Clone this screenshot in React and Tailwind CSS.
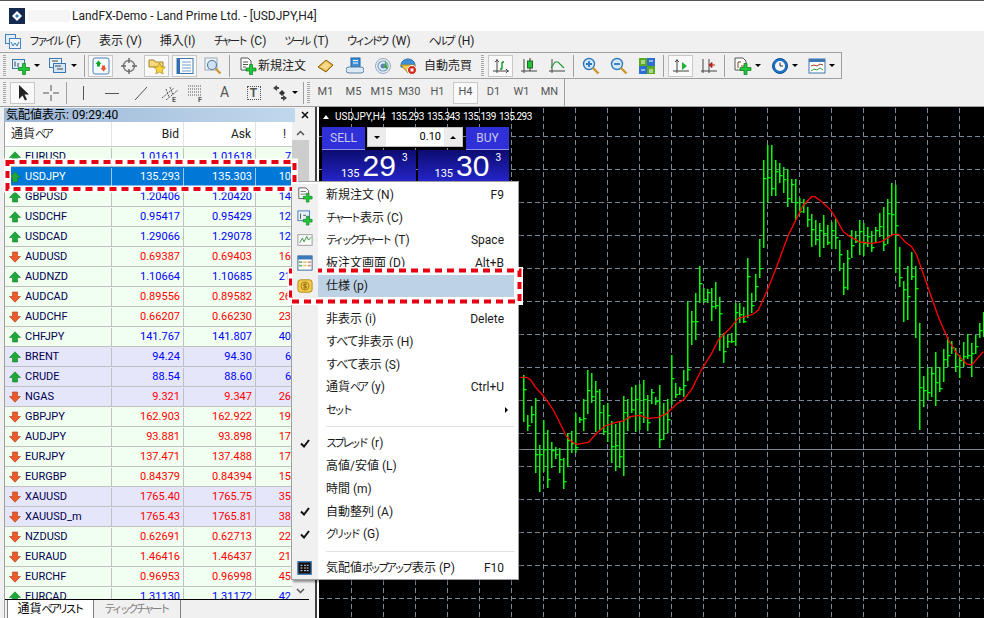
import React from 'react';

const rows = [
  ['EURUSD', '1.01611', '1.01618', '7', 1, 0],
  ['USDJPY', '135.293', '135.303', '10', 1, 0],
  ['GBPUSD', '1.20406', '1.20420', '14', 1, 0],
  ['USDCHF', '0.95417', '0.95429', '12', 1, 0],
  ['USDCAD', '1.29066', '1.29078', '12', 1, 0],
  ['AUDUSD', '0.69387', '0.69403', '16', 0, 0],
  ['AUDNZD', '1.10664', '1.10685', '21', 1, 0],
  ['AUDCAD', '0.89556', '0.89582', '26', 0, 0],
  ['AUDCHF', '0.66207', '0.66230', '23', 0, 0],
  ['CHFJPY', '141.767', '141.807', '40', 1, 0],
  ['BRENT', '94.24', '94.30', '6', 1, 1],
  ['CRUDE', '88.54', '88.60', '6', 1, 1],
  ['NGAS', '9.321', '9.347', '26', 0, 1],
  ['GBPJPY', '162.903', '162.922', '19', 0, 0],
  ['AUDJPY', '93.881', '93.898', '17', 0, 0],
  ['EURJPY', '137.471', '137.488', '17', 0, 0],
  ['EURGBP', '0.84379', '0.84394', '15', 0, 0],
  ['XAUUSD', '1765.40', '1765.75', '35', 0, 1],
  ['XAUUSD_m', '1765.43', '1765.81', '38', 0, 1],
  ['NZDUSD', '0.62691', '0.62713', '22', 0, 0],
  ['EURAUD', '1.46416', '1.46437', '21', 0, 0],
  ['EURCHF', '0.96953', '0.96998', '45', 0, 0],
  ['EURCAD', '1.31130', '1.31172', '42', 1, 0],
];

// high/low of each bar, read off the 3x crops
const bars = [[795,935],[915,962],[888,940],[865,1090],[1005,1145],[930,1085],[960,1133],[995,1075],[1012,1048],[1015,1088],[1045,1137],[970,1070],[963,1030],[910,1030],[922,938],[868,962],[780,912],[790,880],[812,965],[838,960],[885,975],[880,995],[932,1060],[942,1082],[932,1075],[858,1098],[868,962],[832,910],[825,965],[822,960],[810,940],[855,962],[838,882],[860,885],[825,1013],[880,990],[868,970],[735,885],[818,865],[832,855],[780,862],[573,812],[602,705],[548,690],[468,578],[535,580],[538,578],[535,632],[516,598],[560,722],[668,758],[675,715],[668,700],[578,708],[580,640],[592,640],[445,625],[548,610],[492,572],[388,505],[150,415],[105,280],[105,258],[150,258],[160,220],[170,248],[178,290],[208,280],[206,330],[265,310],[268,310],[290,352],[312,412],[330,405],[338,440],[315,415],[345,405],[335,418],[328,418],[390,482],[458,555],[420,540],[360,445],[362,400],[330,435],[340,438],[352,412],[362,425],[350,398],[308,380],[292,422],[268,402],[220,375],[225,488],[410,532],[512,635],[468,630],[425,510],[468,685],[640,960],[798,890],[770,870],[770,860],[725,888],[772,845],[718,815],[680,772],[692,732],[715,785],[735,805],[695,770],[672,748],[698,800],[675,732],[640,685],[605,682]];

const ma = [[0,802],[20,802],[32,810],[45,830],[70,858],[85,878],[100,900],[120,940],[140,980],[155,995],[170,1003],[205,997],[230,970],[255,948],[285,938],[310,933],[330,920],[360,916],[385,925],[415,922],[440,910],[470,882],[490,870],[515,838],[545,778],[575,730],[595,690],[630,655],[655,625],[675,620],[700,612],[715,600],[740,545],[770,470],[805,375],[850,285],[875,260],[885,260],[905,275],[930,298],[945,320],[970,365],[990,380],[1020,396],[1055,400],[1085,395],[1120,373],[1135,373],[1155,395],[1175,410],[1190,435],[1225,535],[1255,620],[1285,690],[1310,730],[1340,762],[1355,765],[1390,725]];

const closeAt = [0.3, 0.6, 0.45, 0.75, 0.2, 0.55, 0.85];

// the reference's UI font has narrow kana, so kana runs get squeezed
function Jp({ children }) {
  return String(children).split(/([\u30A0-\u30FF]+|[\u3040-\u309F]+)/).map((s, i) => {
    if (/[\u30A0-\u30FF]/.test(s)) return <span key={i} className="text-[11px] tracking-[-3px] mr-[2px]">{s}</span>;
    if (/[\u3040-\u309F]/.test(s)) return <span key={i} className="tracking-[-1px]">{s}</span>;
    return s;
  });
}

function Chart() {
  const hs = [136, 169, 202, 235, 268, 301, 334, 367, 400, 433, 466, 499, 532, 565, 598];
  const vs = [];
  for (let x = 351; x < 984; x += 32) vs.push(x);
  return (
    <svg className="block w-full h-full" viewBox="319 107 665 511">
      <g shapeRendering="crispEdges">
        {hs.map((y) => (
          <line key={y} x1="319" x2="984" y1={y + 0.5} y2={y + 0.5} stroke="#778899" strokeDasharray="5 3" />
        ))}
        {vs.map((x) => (
          <line key={x} x1={x + 0.5} x2={x + 0.5} y1="108" y2="618" stroke="#778899" strokeDasharray="5 3" />
        ))}
        <line x1="319" x2="984" y1="449.5" y2="449.5" stroke="#778899" />
      </g>
      {bars.map(([t, b], i) => {
        const x = 523 + i * 4;
        const top = Math.round(110 + t / 3);
        const bot = Math.round(110 + b / 3);
        const c = Math.round(top + (bot - top) * closeAt[i % 7]);
        return (
          <g key={i} fill="#00ff00">
            <rect x={x} y={top} width="1.5" height={bot - top} />
            <rect x={x + 1} y={c} width="2.5" height="1.3" />
          </g>
        );
      })}
      <polyline
        fill="none"
        stroke="#ff0000"
        strokeWidth="1.3"
        points={ma.map(([x, y]) => `${520 + x / 3},${110 + y / 3}`).join(' ')}
      />
    </svg>
  );
}

const GD = '#0b7a1b';

function Cross({ x = 8, y = 8, s = 5 }) {
  return (
    <path
      d={`M${x - 1.5} ${y - s}h3v${s - 1.5}h${s - 1.5}v3h-${s - 1.5}v${s - 1.5}h-3v-${s - 1.5}h-${s - 1.5}v-3h${s - 1.5}z`}
      fill="#22c83a"
      stroke={GD}
      strokeWidth="0.7"
    />
  );
}

function Caret() {
  return <span className="w-0 h-0 border-x-[3px] border-x-transparent border-t-[3px] border-t-black" />;
}

function I({ children, w = 18, h = 18 }) {
  return (
    <svg width={w} height={h} viewBox="0 0 18 18" className="shrink-0">
      {children}
    </svg>
  );
}

const NewChart = () => (
  <I>
    <rect x="0.5" y="2.5" width="12" height="9" fill="#dff0fb" stroke="#3d76b0" />
    <path d="M3 4.5v5M6 6v4" stroke="#444" />
    <Cross x={12} y={12} s={5.5} />
  </I>
);
const Profile = () => (
  <I>
    <rect x="0.5" y="1.5" width="12" height="9" fill="#e8f3fb" stroke="#3d76b0" />
    <rect x="4.5" y="6.5" width="12" height="9" fill="#d2e6f6" stroke="#3d76b0" />
    <path d="M6 9h6M8 12h6M3 4h6" stroke="#444" />
  </I>
);
const Watch = () => (
  <I>
    <rect x="1" y="1" width="16" height="16" rx="2" fill="#f5fafe" stroke="#4a82b8" />
    <path d="M6.5 3.5l3 3.5H8v2.5H5V7H3.5z" fill="#12a52a" />
    <path d="M11.5 14.500l-3-3.500H10V8.500h3V11h1.500z" fill="#e8562a" />
  </I>
);
const Nav = () => (
  <I>
    <circle cx="9" cy="9" r="5.5" fill="none" stroke="#777" strokeWidth="1.4" />
    <path d="M9 1v5M9 12v5M1 9h5M12 9h5" stroke="#666" strokeWidth="1.4" />
  </I>
);
const FolderStar = () => (
  <I>
    <path d="M1 3h5l1.500 2H15v5H1z" fill="#f6d77e" stroke="#a5822f" />
    <path d="M11.500 6l1.800 3.700 4 .5-3 2.800.8 4-3.600-2-3.600 2 .8-4-3-2.800 4-.5z" fill="#f7d23a" stroke="#a98818" strokeWidth="0.7" />
  </I>
);
const Terminal = () => (
  <I>
    <rect x="1" y="1.500" width="16" height="15" fill="#fdfdfd" stroke="#3d76b0" />
    <rect x="1" y="1.500" width="3" height="15" fill="#2d6fb0" />
    <path d="M6 5h9M6 8h9M6 11h9M6 14h9" stroke="#6fa0cf" />
  </I>
);
const Tester = () => (
  <I>
    <rect x="1" y="1" width="12" height="12" fill="#eef3f8" stroke="#9aa9b8" />
    <circle cx="8" cy="8" r="4.500" fill="#cfe3f3" stroke="#5d7f9f" strokeWidth="1.2" />
    <path d="M11.500 11.500l5 5" stroke="#c9962e" strokeWidth="2.200" />
  </I>
);
const NewOrder = () => (
  <I>
    <path d="M2 1h7l3 3v9H2z" fill="#fff" stroke="#555" />
    <path d="M4 5h5M4 7.500h5M4 10h3" stroke="#555" />
    <Cross x={12} y={12.500} s={5} />
  </I>
);
const Book = () => (
  <I>
    <path d="M1 10l8-7 7 5-7 7z" fill="#e4ad3a" stroke="#8c6416" />
    <path d="M3 10l6-5.500 5 3.800-5 4.700z" fill="#f6d98a" />
  </I>
);
const Cloud = () => (
  <I>
    <rect x="5" y="1" width="9" height="9" fill="#3d8fd6" stroke="#1e5f9f" />
    <path d="M7 3.500h5M7 6h5" stroke="#fff" />
    <path d="M3 16a3 3 0 0 1 0-6h12a3 3 0 0 1 0 6z" fill="#dbe9f5" stroke="#5d84a9" />
  </I>
);
const Radio = () => (
  <I>
    <circle cx="9" cy="9" r="7.500" fill="#eaeef2" stroke="#9aa9b8" />
    <circle cx="9" cy="9" r="5" fill="none" stroke="#6fa0cf" strokeWidth="1.200" />
    <circle cx="9" cy="9" r="2.500" fill="#5c88b0" />
    <path d="M11 3l3 9-3.500-1z" fill="#3faa3a" />
  </I>
);
const Auto = () => (
  <I>
    <path d="M2 8a7 6 0 0 1 14 0v2H2z" fill="#3e8fd3" stroke="#2a6aa3" />
    <path d="M2 8l7 8 7-8z" fill="#f1c94f" stroke="#a98818" />
    <circle cx="13" cy="13" r="4.500" fill="#d4281c" stroke="#fff" />
    <rect x="11.500" y="11.500" width="3" height="3" fill="#fff" />
  </I>
);
const BarsChart = () => (
  <I>
    <path d="M5 2v14M1 14h16M3 5l2-2 2 2M14 12l2 2-2 2" fill="none" stroke="#444" />
    <path d="M10 5v7M10 5h2M8 12h2" fill="none" stroke="#0f9a22" strokeWidth="1.400" />
  </I>
);
const Candle = () => (
  <I>
    <path d="M4 2v14M1 14h16" stroke="#444" />
    <path d="M10 1v13" stroke="#333" />
    <rect x="7.500" y="4" width="5" height="7" fill="#21c23a" stroke="#1c6b25" />
  </I>
);
const LineChart = () => (
  <I>
    <path d="M4 2v14M1 14h16" stroke="#444" />
    <path d="M3 11l4-6 3 0 6 6" fill="none" stroke="#1f9a30" strokeWidth="1.200" />
  </I>
);
const Zoom = ({ minus }) => (
  <I>
    <circle cx="7" cy="7" r="5.500" fill="#d3e8f8" stroke="#2f79bd" strokeWidth="1.400" />
    <path d={minus ? 'M4 7h6' : 'M4 7h6M7 4v6'} stroke="#2f79bd" strokeWidth="1.800" />
    <path d="M11 11l5.500 5.500" stroke="#c9962e" strokeWidth="2.400" />
  </I>
);
const Tile = () => (
  <I>
    <rect x="1" y="1" width="8" height="8" fill="#5caa1e" />
    <rect x="9" y="1" width="8" height="8" fill="#2c6fd0" />
    <rect x="1" y="9" width="8" height="8" fill="#2c6fd0" />
    <rect x="9" y="9" width="8" height="8" fill="#5caa1e" />
    <path d="M3 4h4M3 6h4M11 4h4M3 13h4M11 13h4M11 15h4" stroke="#fff" />
  </I>
);
const AutoScroll = () => (
  <I>
    <path d="M5 2v14M1 14h16M3 5l2-2 2 2" fill="none" stroke="#444" />
    <path d="M10 5l5 4-5 4z" fill="#22b23a" />
  </I>
);
const Shift = () => (
  <I>
    <path d="M3 2v14M1 14h16M9 2v14" fill="none" stroke="#444" />
    <path d="M15 8l-4 0M12 5.500l-3 2.500 3 2.500z" stroke="#b3261b" fill="#b3261b" />
  </I>
);
const Indic = () => (
  <I>
    <path d="M1 1h8l3 3v9H1z" fill="#fff" stroke="#555" />
    <path d="M4 5v6M4 5h3M7 9h3" stroke="#7c4a12" />
    <Cross x={11.500} y={12} s={5.500} />
  </I>
);
const Clock = () => (
  <I>
    <circle cx="9" cy="9" r="7.500" fill="#1e74c8" stroke="#0d4f94" />
    <circle cx="9" cy="9" r="5" fill="#f6f8fb" />
    <path d="M9 5.500V9h3" stroke="#333" fill="none" />
  </I>
);
const Template = () => (
  <I>
    <rect x="1" y="2" width="16" height="14" fill="#fff" stroke="#3d76b0" />
    <rect x="1" y="2" width="16" height="3" fill="#3d76b0" />
    <path d="M3 9l3-1 3 1 3-2 3 1" fill="none" stroke="#a03a1c" />
    <path d="M3 14l3-2 3 1 3-2 3 2" fill="none" stroke="#30a03a" />
  </I>
);
const Arrow = () => (
  <I>
    <path d="M5 1v14l3.500-3.500 2.500 5 2-1-2.500-5h4.500z" fill="#222" />
  </I>
);
const Crosshair = () => (
  <I>
    <path d="M9 1v6M9 11v6M1 9h6M11 9h6" stroke="#555" />
  </I>
);
const VLine = () => <I><path d="M9.500 2v14" stroke="#555" /></I>;
const HLine = () => <I><path d="M2 9.500h14" stroke="#555" /></I>;
const Trend = () => <I><path d="M3 16L15 3" stroke="#555" /></I>;
const Channel = () => (
  <I>
    <path d="M1 14L13 4M5 16L17 6M5 5l3 8M9 3l3 8" stroke="#555" strokeDasharray="2 1" fill="none" />
    <text x="11" y="17.500" fontSize="7" fontWeight="700" fill="#555">E</text>
  </I>
);
const Fibo = () => (
  <I>
    <path d="M1 2h13M1 5h13M1 8h13M1 11h13" stroke="#555" strokeDasharray="1 1" />
    <text x="11" y="17.500" fontSize="7" fontWeight="700" fill="#555">F</text>
  </I>
);
const ArrowsTool = () => (
  <I>
    <path d="M2 4l4-3v2h2v2H6v2zM16 14l-4 3v-2h-2v-2h2v-2z" fill="#444" />
    <path d="M8 9l3-3 3 3-3 3z" fill="#333" />
  </I>
);
const Up = () => (
  <svg width="12" height="12" viewBox="0 0 12 12" className="shrink-0">
    <path d="M6 .800L11.500 6.500H8.500V11h-5V6.500H.5z" fill="#1fa83a" stroke="#157a28" strokeWidth="0.6" />
  </svg>
);
const Down = () => (
  <svg width="12" height="12" viewBox="0 0 12 12" className="shrink-0">
    <path d="M6 11.200L11.500 5.500H8.500V1h-5v4.500H.5z" fill="#ea5a2a" stroke="#b23a14" strokeWidth="0.6" />
  </svg>
);

function Grip() {
  return (
    <div className="w-[9px] h-[22px] flex justify-center shrink-0">
      <div className="w-[3px] h-full bg-[repeating-linear-gradient(180deg,#a8a8a8_0,#a8a8a8_1px,#f0f0f0_1px,#f0f0f0_2px)]" />
    </div>
  );
}

function Sep() {
  return <div className="w-px h-[22px] bg-[#a0a0a0] shrink-0" />;
}

function Btn({ active, children, className = 'w-[25px]' }) {
  return (
    <div
      className={`${className} h-[22px] flex items-center justify-center shrink-0 border ${
        active ? 'border-[#c8c8c8] bg-[#f9f9f9]' : 'border-transparent'
      }`}
    >
      {children}
    </div>
  );
}

function Toolbar1() {
  return (
    <div className="h-[27px] w-[842px] border-t border-b border-r border-[#a0a0a0] flex items-center shrink-0">
      <Grip />
      <div className="w-[33px] pl-[3px] flex items-center gap-[4px] shrink-0"><NewChart /><Caret /></div>
      <div className="w-[4px] shrink-0" />
      <div className="w-[33px] pl-[3px] flex items-center gap-[4px] shrink-0"><Profile /><Caret /></div>
      <div className="w-[5px] shrink-0" />
      <Sep />
      <div className="flex items-center gap-[3px] ml-[3px]">
        <Btn active><Watch /></Btn>
        <Btn><Nav /></Btn>
        <Btn active><FolderStar /></Btn>
        <Btn active><Terminal /></Btn>
        <Btn><Tester /></Btn>
      </div>
      <div className="w-[4px] shrink-0" />
      <Sep />
      <div className="w-[83px] pl-[9px] flex items-center gap-[1px] text-[12px] text-[#222] shrink-0">
        <NewOrder /><span>新規注文</span>
      </div>
      <Btn><Book /></Btn>
      <div className="w-[4px] shrink-0" />
      <Btn><Cloud /></Btn>
      <div className="w-[3px] shrink-0" />
      <Btn><Radio /></Btn>
      <div className="w-[80px] pl-[4px] flex items-center gap-[7px] text-[12px] text-[#222] shrink-0">
        <Auto /><span className="whitespace-nowrap">自動売買</span>
      </div>
      <div className="w-[3px] shrink-0" />
      <Grip />
      <div className="flex items-center gap-[3px] ml-[1px]">
        <Btn active><BarsChart /></Btn>
        <Btn><Candle /></Btn>
        <Btn><LineChart /></Btn>
      </div>
      <div className="w-[4px] shrink-0" />
      <Sep />
      <div className="flex items-center gap-[3px] ml-[4px]">
        <Btn><Zoom /></Btn>
        <Btn><Zoom minus /></Btn>
        <Btn><Tile /></Btn>
      </div>
      <div className="w-[4px] shrink-0" />
      <Sep />
      <div className="flex items-center gap-[3px] ml-[4px]">
        <Btn active><AutoScroll /></Btn>
        <Btn><Shift /></Btn>
      </div>
      <div className="w-[3px] shrink-0" />
      <Sep />
      <div className="flex items-center gap-[3px] ml-[9px]">
        <div className="w-[34px] flex items-center gap-[3px]"><Indic /><Caret /></div>
        <div className="w-[34px] flex items-center gap-[3px]"><Clock /><Caret /></div>
        <div className="w-[34px] flex items-center gap-[3px]"><Template /><Caret /></div>
      </div>
    </div>
  );
}

function Toolbar2() {
  return (
    <div className="h-[28px] flex items-center border-b border-[#a0a0a0] shrink-0">
      <div className="w-[565px] h-[27px] flex items-center border-r border-[#a0a0a0] text-[11px] text-[#555]">
        <Grip />
        <Btn active className="w-[25px] ml-[1px]"><Arrow /></Btn>
        <Btn className="w-[25px] ml-[3px]"><Crosshair /></Btn>
        <div className="w-[3px] shrink-0" />
        <Sep />
        <div className="flex items-center gap-[4px] ml-[3px]">
          <Btn><VLine /></Btn>
          <Btn><HLine /></Btn>
          <Btn><Trend /></Btn>
          <Btn><Channel /></Btn>
          <Btn className="w-[25px] -ml-[3px]"><Fibo /></Btn>
          <Btn><span className="text-[14px] text-[#555]">A</span></Btn>
          <Btn>
            <span className="w-[14px] h-[14px] border border-dotted border-[#555] flex items-center justify-center text-[12px] font-bold text-[#555]">T</span>
          </Btn>
        </div>
        <div className="w-[37px] pl-[5px] flex items-center gap-[3px] shrink-0"><ArrowsTool /><Caret /></div>
        <Sep />
        <Grip />
        <div className="flex items-center gap-[3px]">
          {['M1', 'M5', 'M15', 'M30', 'H1'].map((t) => <Btn key={t}>{t}</Btn>)}
          <Btn active>H4</Btn>
          {['D1', 'W1', 'MN'].map((t) => <Btn key={t}>{t}</Btn>)}
        </div>
      </div>
    </div>
  );
}

function MarketWatch() {
  return (
    <div className="w-[317px] h-full flex flex-col pl-[4px] pr-[6px] pt-[1px] border-r-2 border-[#404040] shrink-0 relative text-[11px]">
      <div className="h-[14px] flex items-center">
        <div className="w-[293px] h-full bg-[linear-gradient(90deg,#9db7d6,#c0d8ec)] pl-[2px] flex items-center text-[12px] leading-none text-black">
          気配値表示: 09:29:40
        </div>
        <svg width="8" height="8" viewBox="0 0 8 8" className="ml-[6px]"><path d="M1 1l6 6M7 1l-6 6" stroke="#111" strokeWidth="1.600" /></svg>
      </div>
      <div className="flex flex-1 min-h-0 bg-white border-l border-[#a0a0a0]">
        <div className="w-[288px] flex flex-col overflow-hidden">
          <div className="h-[25px] flex border-b border-[#c8c8c8] bg-white text-[#222] text-[12px] shrink-0">
            <div className="w-[107px] pl-[6px] flex items-center border-r border-[#e4e4e4] whitespace-pre"><span><Jp>通貨ペア</Jp></span></div>
            <div className="w-[72px] pr-[4px] flex items-center justify-end border-r border-[#e4e4e4]">Bid</div>
            <div className="w-[72px] pr-[4px] flex items-center justify-end border-r border-[#e4e4e4]">Ask</div>
            <div className="flex-1 pr-[6px] flex items-center justify-end">!</div>
          </div>
          {rows.map(([sym, bid, ask, sp, up, lav]) => {
            const sel = sym === 'USDJPY';
            const tone = sel ? 'text-white' : up ? 'text-[#0000ff]' : 'text-[#ff0000]';
            return (
              <div
                key={sym}
                className={`h-[20px] pt-[1px] flex shrink-0 ${sel ? 'bg-[#0078d7] border-b border-[#0078d7]' : `border-b border-[#c0c0c0] ${lav ? 'bg-[#e6e6fa]' : 'bg-[#f0fff0]'}`}`}
              >
                <div className={`w-[107px] pl-[4px] flex items-center gap-[4px] border-r ${sel ? 'border-[#9cc8ec] text-white' : 'border-[#c0c0c0] text-[#000050]'}`}>
                  {up ? <Up /> : <Down />}{sym}
                </div>
                <div className={`w-[72px] pr-[3px] flex items-center justify-end border-r ${sel ? 'border-[#9cc8ec]' : 'border-[#c0c0c0]'} ${tone}`}>{bid}</div>
                <div className={`w-[72px] pr-[3px] flex items-center justify-end border-r ${sel ? 'border-[#9cc8ec]' : 'border-[#c0c0c0]'} ${tone}`}>{ask}</div>
                <div className={`flex-1 pr-[1px] flex items-center justify-end ${tone}`}>{sp}</div>
              </div>
            );
          })}
        </div>
        <div className="w-[17px] bg-[#f0f0f0] flex flex-col items-center">
          <svg width="9" height="6" viewBox="0 0 9 6" className="mt-[8px]"><path d="M1 5l3.500-3.500L8 5" fill="none" stroke="#555" strokeWidth="1.500" /></svg>
          <div className="w-full h-[60px] bg-[#cdcdcd] mt-[4px]" />
          <div className="flex-1" />
          <svg width="9" height="6" viewBox="0 0 9 6" className="mb-[24px]"><path d="M1 1l3.500 3.500L8 1" fill="none" stroke="#555" strokeWidth="1.500" /></svg>
        </div>
      </div>
      <div className="absolute left-[5px] right-[6px] bottom-0 h-[19px] bg-[#f0f0f0] border-t border-black flex text-[12px] leading-none whitespace-pre">
        <div className="ml-[2px] w-[87px] h-full bg-white border-x border-[#808080] flex items-center justify-center text-black"><span><Jp>通貨ペアリスト</Jp></span></div>
        <div className="w-[87px] h-full border-r border-[#808080] flex items-center justify-center text-[#808080]"><span><Jp>ティックチャート</Jp></span></div>
      </div>
    </div>
  );
}

function OneClick() {
  return (
    <div className="absolute left-[3px] top-[20px] w-[187px] h-[54px] text-white">
      <div className="h-[23px] flex items-start">
        <div className="w-[43px] h-[23px] bg-[#3030d8] flex items-center justify-center text-[12px] text-[#c8c8f0] border-b border-[#9090e8]">SELL</div>
        <div className="w-[96px] h-[20px] ml-[2px] bg-[#d8d8d8] border border-[#c0c0c0] flex items-center">
          <div className="w-[18px] h-full bg-[#ececec] flex items-center justify-center"><span className="w-0 h-0 border-x-[3px] border-x-transparent border-t-[3px] border-t-black" /></div>
          <div className="flex-1 h-full bg-white text-black text-[11px] flex items-center justify-end pr-[3px]">0.10</div>
          <div className="w-[18px] h-full bg-[#ececec] flex items-center justify-center"><span className="w-0 h-0 border-x-[3px] border-x-transparent border-b-[3px] border-b-black" /></div>
        </div>
        <div className="w-[43px] h-[23px] ml-[3px] bg-[#3030d8] flex items-center justify-center text-[12px] text-[#c8c8f0] border-b border-[#9090e8]">BUY</div>
      </div>
      <div className="h-[31px] flex gap-[2px]">
        {[['29', 'pl-[19px]'], ['30', 'pl-[17px]']].map(([n, pad]) => (
          <div key={n} className={`flex-1 bg-[linear-gradient(180deg,#0c0c70,#2424c8)] flex items-start ${pad}`}>
            <span className="text-[11px] leading-none mt-[18px]">135</span>
            <span className="text-[30px] leading-none ml-[3px] mt-[1px] font-['Liberation_Sans',sans-serif]">{n}</span>
            <span className="text-[10px] leading-none ml-[6px] mt-[3px]">3</span>
          </div>
        ))}
      </div>
    </div>
  );
}

function MI({ label, hint, icon, check, arrow, hl }) {
  return (
    <div className="h-[22.75px] flex items-center relative whitespace-pre">
      <div className="w-[26px] h-full flex items-center justify-center bg-[#f0f0f0] shrink-0 relative z-10">
        {check ? <svg width="10" height="9" viewBox="0 0 10 9"><path d="M1 4.500l3 3 5-6.500" fill="none" stroke="#111" strokeWidth="2" /></svg> : icon}
      </div>
      <div className={`flex-1 h-full flex items-center pl-[8px] pr-[14px] justify-between ${hl ? 'bg-[#bdd2e4] mr-[4px] -ml-[22px] pl-[30px]' : ''}`}>
        <span><Jp>{label}</Jp></span>
        {hint && <span>{hint}</span>}
      </div>
      {arrow && <span className="absolute right-[10px] w-0 h-0 border-y-[3px] border-y-transparent border-l-[3px] border-l-black" />}
    </div>
  );
}

function MSep() {
  return (
    <div className="h-[10.5px] flex">
      <div className="w-[26px] bg-[#f0f0f0]" />
      <div className="flex-1 flex items-center pl-[8px] pr-[3px]"><div className="w-full h-px bg-[#e2e2e2]" /></div>
    </div>
  );
}

function ContextMenu() {
  return (
    <div className="absolute left-[291px] top-[181px] w-[228px] h-[399px] bg-white border border-[#a0a0a0] pt-[1.5px] shadow-[2px_2px_2px_rgba(0,0,0,0.4)] text-[12px] text-[#1a1a1a] leading-none">
      <MI label="新規注文 (N)" hint="F9" icon={<I w={16} h={16}><path d="M2 1h8l3 3v9H2z" fill="#fff" stroke="#555" /><path d="M4 5h6M4 8h6" stroke="#666" /><Cross x={12} y={12} s={5} /></I>} />
      <MI label="チャート表示 (C)" icon={<I w={16} h={16}><rect x="1" y="1" width="13" height="11" fill="#e6f1fa" stroke="#3d76b0" /><path d="M4 4v6M7 6h3" stroke="#444" /><Cross x={12} y={12} s={5} /></I>} />
      <MI label="ティックチャート (T)" hint="Space" icon={<I w={16} h={16}><rect x="1" y="3" width="16" height="12" fill="#f8f8f8" stroke="#999" /><path d="M3 12l3-5 2 4 3-6 2 4 3-3" fill="none" stroke="#2a8a3a" /></I>} />
      <MI label="板注文画面 (D)" hint="Alt+B" icon={<I w={16} h={16}><rect x="1" y="1" width="16" height="16" fill="#fff" stroke="#2d5f96" /><rect x="1" y="1" width="16" height="4" fill="#3a78b8" /><path d="M2 7h4v2H2zM2 11h4v2H2z" fill="#7db06a" /><path d="M7 7h4v2H7zM7 11h4v2H7z" fill="#e5d07a" /><path d="M12 7h4v2h-4zM12 11h4v2h-4z" fill="#e39a8a" /></I>} />
      <MI hl label="仕様 (p)" icon={<I w={16} h={16}><rect x="1" y="2" width="16" height="14" rx="3" fill="#f3c94a" stroke="#a98818" /><circle cx="9" cy="9" r="4.500" fill="none" stroke="#a07a10" /><path d="M11 7H8a1 1 0 0 0 0 2h2a1 1 0 0 1 0 2H7M9 5.500v7" fill="none" stroke="#8a6a10" /></I>} />
      <MSep />
      <MI label="非表示 (i)" hint="Delete" />
      <MI label="すべて非表示 (H)" />
      <MI label="すべて表示 (S)" />
      <MI label="通貨ペア (y)" hint="Ctrl+U" />
      <MI label="セット" arrow />
      <MSep />
      <MI label="スプレッド (r)" check />
      <MI label="高値/安値 (L)" />
      <MI label="時間 (m)" />
      <MI label="自動整列 (A)" check />
      <MI label="グリッド (G)" check />
      <MSep />
      <MI label="気配値ポップアップ表示 (P)" hint="F10" icon={<I w={16} h={16}><rect x="1" y="2" width="15" height="14" fill="#111" stroke="#3d76b0" strokeWidth="1.500" /><path d="M4 6h2M4 9h2M4 12h2M8 6h5M8 9h5M8 12h5" stroke="#fff" strokeDasharray="2 1" /></I>} />
    </div>
  );
}

function Highlights() {
  return (
    <svg className="absolute inset-0 pointer-events-none" width="984" height="618" viewBox="0 0 984 618">
      {[[7.5, 162, 287, 27], [291, 270.500, 228.500, 31]].map(([x, y, w, h]) => (
        <g key={x} fill="none">
          <rect x={x} y={y} width={w} height={h} stroke="#fff" strokeWidth="7" />
          <rect x={x} y={y} width={w} height={h} stroke="#e60012" strokeWidth="4" strokeDasharray="7 5" />
        </g>
      ))}
    </svg>
  );
}

export default function App() {
  return (
    <div className="relative w-[984px] h-[618px] overflow-hidden flex flex-col bg-[#f0f0f0] font-['Roboto','Noto_Sans_CJK_JP',sans-serif] text-[12px]">
      <div className="h-[31px] shrink-0 bg-white border-t border-[#555] flex items-center pl-[9px] text-[#222] text-[12px]">
        <svg width="16" height="16" viewBox="0 0 16 16" className="shrink-0">
          <rect width="16" height="16" fill="#15284f" />
          <path d="M8 3l5 5-5 5-5-5z" fill="#fff" />
          <path d="M8 6l2 2-2 2-2-2z" fill="#2f79bd" />
        </svg>
        <div className="w-[43px] h-[12px] ml-[3px] mr-[1px] bg-[#f4f5f4] rounded-sm" />
        LandFX-Demo - Land Prime Ltd. - [USDJPY,H4]
      </div>
      <div className="h-[21px] shrink-0 flex items-center text-[#222] whitespace-pre">
        <svg width="16" height="16" viewBox="0 0 16 16" className="ml-[5px] mr-[8px] shrink-0">
          <rect x="0.500" y="0.500" width="10" height="9" fill="#dfeefa" stroke="#4a82b8" />
          <rect x="4.500" y="4.500" width="11" height="10" fill="#eef6fc" stroke="#4a82b8" />
          <path d="M6 8l2 4 2-3 2 3 2-4" fill="none" stroke="#2f79bd" />
        </svg>
        <div className="flex gap-[18px]">
          {['ファイル (F)', '表示 (V)', '挿入(I)', 'チャート (C)', 'ツール (T)', 'ウィンドウ (W)', 'ヘルプ (H)'].map((m) => <span key={m}><Jp>{m}</Jp></span>)}
        </div>
      </div>
      <Toolbar1 />
      <Toolbar2 />
      <div className="flex-1 min-h-0 flex">
        <MarketWatch />
        <div className="relative flex-1 min-w-0 bg-black border-l-2 border-white">
          <Chart />
          <div className="absolute left-[4px] top-[3px] flex items-center text-white text-[10px] leading-[14px] whitespace-pre">
            <span className="w-0 h-0 border-x-[3px] border-x-transparent border-b-[4px] border-b-white mr-[6px]" />
            <span className="w-[56px]">USDJPY,H4</span>
            {['135.293', '135.343', '135.139', '135.293'].map((p, i) => (
              <span key={i} className="w-[36px] tracking-[-0.5px]">{p}</span>
            ))}
          </div>
          <OneClick />
        </div>
      </div>
      <ContextMenu />
      <Highlights />
    </div>
  );
}
